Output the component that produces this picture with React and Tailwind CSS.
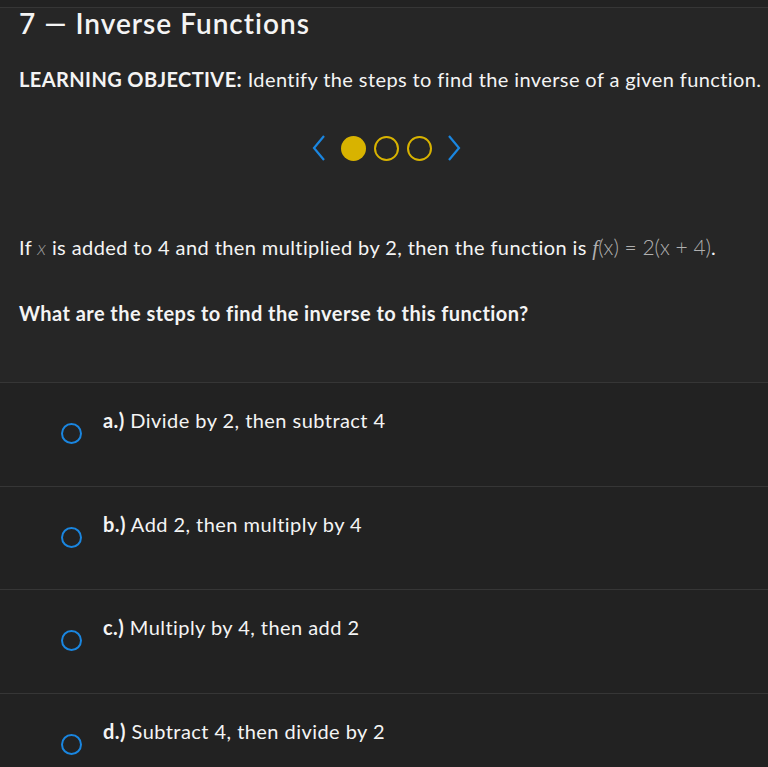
import React, { useState } from "react";

const options = [
  { key: "a.)", text: "Divide by 2, then subtract 4" },
  { key: "b.)", text: "Add 2, then multiply by 4" },
  { key: "c.)", text: "Multiply by 4, then add 2" },
  { key: "d.)", text: "Subtract 4, then divide by 2" },
];

const App = () => {
  const [page, setPage] = useState(0);
  const [picked, setPicked] = useState(null);

  return (
    <div className="h-[767px] bg-[#222222] text-[#f4f4f4] font-['Lato','Open_Sans',sans-serif] overflow-hidden">
      <div className="h-[8px] bg-[#222222] border-b border-[#363636]" />
      <div className="bg-[#262626] px-[19px] pb-[56px]">
        <h1 className="pt-0 text-[28px] leading-[30px] font-semibold tracking-[1px]">
          7 — Inverse Functions
        </h1>
        <p className="mt-[28px] text-[20px] leading-[26px] tracking-[0.4px] whitespace-nowrap">
          <span className="font-bold">LEARNING OBJECTIVE:</span> Identify the steps to find the inverse of a given function.
        </p>

        <div className="mt-[42px] flex items-center justify-center gap-[8px] pl-[4px]">
          <button onClick={() => setPage(Math.max(0, page - 1))} className="mr-[6px]">
            <svg width="16" height="28" viewBox="0 0 16 28" fill="none">
              <path d="M13 2 L3 14 L13 26" stroke="#1a86e0" strokeWidth="2.2" />
            </svg>
          </button>
          {[0, 1, 2].map((i) => (
            <span
              key={i}
              className={
                i === page
                  ? "w-[25px] h-[25px] rounded-full bg-[#d8b300]"
                  : "w-[25px] h-[25px] rounded-full border-[2.5px] border-[#d8b300]"
              }
            />
          ))}
          <button onClick={() => setPage(Math.min(2, page + 1))} className="ml-[6px]">
            <svg width="16" height="28" viewBox="0 0 16 28" fill="none">
              <path d="M3 2 L13 14 L3 26" stroke="#1a86e0" strokeWidth="2.2" />
            </svg>
          </button>
        </div>

        <p className="mt-[72px] text-[20px] leading-[26px] tracking-[0.4px] whitespace-nowrap">
          If <span className="font-light text-[#9a9a9a] italic">x</span> is added to 4 and then multiplied by 2, then the function is{" "}
          <span className="font-light text-[21px] text-[#b0b0b0] tracking-[0px]">
            <i className="font-['Liberation_Serif',serif]">f</i>(x) = 2(x + 4)
          </span>
          .
        </p>

        <p className="mt-[39px] text-[20px] leading-[26px] tracking-[0.45px] font-bold">
          What are the steps to find the inverse to this function?
        </p>
      </div>

      <div className="border-t border-[#363636]">
        {options.map((o, i) => (
          <button
            key={o.key}
            onClick={() => setPicked(i)}
            className="w-full h-[103.5px] flex items-start border-b border-[#363636] text-left"
          >
            <span className="mt-[40px] ml-[61px] w-[21px] h-[21px] rounded-full border-[2.5px] border-[#1a86e0] flex items-center justify-center">
              {picked === i && <span className="w-[9px] h-[9px] rounded-full bg-[#1a86e0]" />}
            </span>
            <span className="mt-[24px] ml-[21px] text-[20px] leading-[26px] tracking-[0.45px]">
              <span className="font-bold">{o.key}</span> {o.text}
            </span>
          </button>
        ))}
      </div>
    </div>
  );
};

export default App;
